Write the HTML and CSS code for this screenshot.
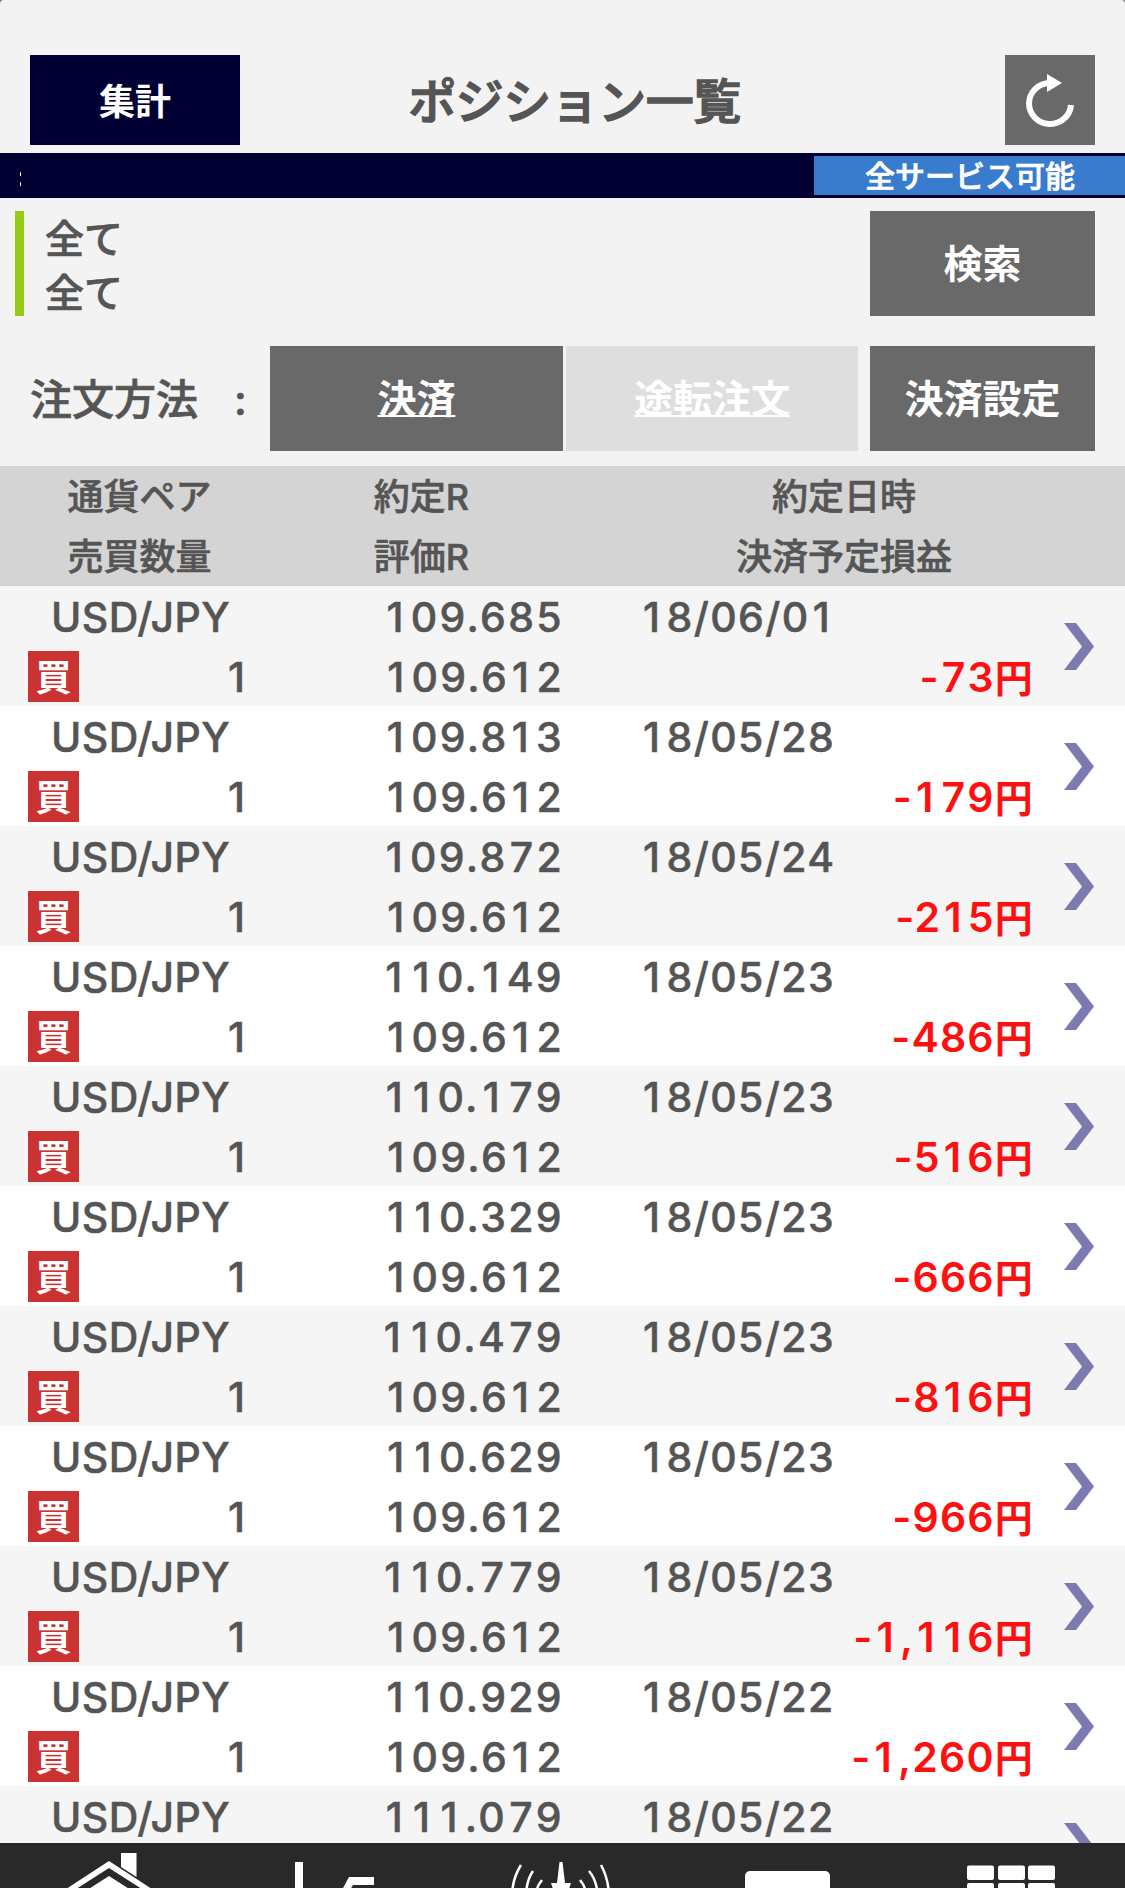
FILE: index.html
```
<!DOCTYPE html>
<html lang="ja">
<head>
    <meta charset="UTF-8">
    <meta name="viewport" content="width=device-width, initial-scale=1.0">
    <title>ポジション一覧</title>
    <link rel="stylesheet" href="styles.css">
</head>
<body>
<div class="screen">

    <!-- ヘッダー -->
    <header class="header">
        <button class="btn_total">集計</button>
        <h1 class="title">ポジション一覧</h1>
        <button class="btn_reload">
            <svg width="50" height="54" viewBox="0 0 50 54">
                <path d="M25 10 A21 20.500 0 1 0 46 32" fill="none" stroke="#fff" stroke-width="6"/>
                <path d="M22 1 L37 10 L22 19 Z" fill="#fff"/>
            </svg>
        </button>
    </header>

    <!-- サービス状況 -->
    <div class="status">
        <span class="ticker">:</span>
        <span class="service">全サービス可能</span>
    </div>

    <!-- 検索条件 -->
    <div class="filter">
        <div class="filter_text">
            <div>全て</div>
            <div>全て</div>
        </div>
        <button class="btn btn_side">検索</button>
    </div>

    <!-- 注文方法 -->
    <div class="order">
        <div class="order_label"><span>注文方法</span><span class="colon">:</span></div>
        <button class="btn btn_order">決済</button>
        <button class="btn btn_order disabled">途転注文</button>
        <button class="btn btn_side">決済設定</button>
    </div>

    <!-- 一覧 -->
    <div class="list_head">
        <div class="head1">通貨ペア<br>売買数量</div>
        <div class="head2">約定R<br>評価R</div>
        <div class="head3">約定日時<br>決済予定損益</div>
    </div>
    <div class="list"></div>

    <!-- フッターメニュー -->
    <footer class="footer">
        <svg width="1125" height="45" viewBox="0 0 1125 45">
            <g fill="#fff">
                <path d="M121 10 H136.500 V34 L121 24 Z"/>
                <path d="M109 18 L155 48 H145 L109 25 L73 48 H63 Z"/>
                <path d="M109 33 L134 49 H84 Z"/>
                <path d="M295 19 H303 V45 H295 Z"/>
                <path d="M349 34 H374 V42 H353 L350 47 H342 Z"/>
                <path d="M559.500 19 H562.500 L565 40 H571 L569 46 H553 L551 40 H557 Z"/>
                <rect x="745" y="28" width="85" height="30" rx="5"/>
                <rect x="967" y="22.500" width="27" height="14.500" rx="2"/>
                <rect x="998" y="22.500" width="27" height="14.500" rx="2"/>
                <rect x="1028" y="22.500" width="27" height="14.500" rx="2"/>
                <rect x="967" y="40" width="27" height="14" rx="2"/>
                <rect x="998" y="40" width="27" height="14" rx="2"/>
                <rect x="1028" y="40" width="27" height="14" rx="2"/>
            </g>
            <g fill="none" stroke="#fff" stroke-width="2.500">
                <path d="M521 22 Q514 33 512.500 46"/>
                <path d="M533 28 Q528 35 526.500 46"/>
                <path d="M542 37 Q538 42 537 46"/>
                <path d="M601 22 Q607 33 608.500 46"/>
                <path d="M589 28 Q595 35 597 46"/>
                <path d="M580 37 Q584 42 585 46"/>
            </g>
        </svg>
    </footer>
</div>

<script>
    // 約定R, 約定日時, 決済予定損益
    let positions = [
        ["109.685", "18/06/01", "-73"],
        ["109.813", "18/05/28", "-179"],
        ["109.872", "18/05/24", "-215"],
        ["110.149", "18/05/23", "-486"],
        ["110.179", "18/05/23", "-516"],
        ["110.329", "18/05/23", "-666"],
        ["110.479", "18/05/23", "-816"],
        ["110.629", "18/05/23", "-966"],
        ["110.779", "18/05/23", "-1,116"],
        ["110.929", "18/05/22", "-1,260"],
        ["111.079", "18/05/22", ""]
    ];

    // 「1」と「7」は幅が狭いので桁をそろえる
    function digits(text){
        return text.replace(/1/g, `<span class="one">1</span>`)
                   .replace(/7/g, `<span class="seven">7</span>`);
    }

    let str = ``;
    positions.forEach(function(item){
        str += `<div class="row">
            <div class="pair">
                <div class="line">USD/JPY</div>`;
        // 損益がまだない行は上段だけ表示
        if(item[2]){
            str += `<div class="line amount"><span class="buy">買</span><span>1</span></div>`;
        }
        str += `</div>
            <div class="rate">
                <div class="line">${digits(item[0])}</div>`;
        if(item[2]){
            str += `<div class="line">${digits("109.612")}</div>`;
        }
        str += `</div>
            <div class="result">
                <div class="line date">${digits(item[1])}</div>`;
        if(item[2]){
            str += `<div class="line loss">${digits(item[2])}<span class="yen">円</span></div>`;
        }
        str += `</div>
            <svg class="arrow" width="30" height="47" viewBox="0 0 30 47"><path d="M0 0 H12 L30 23.500 L12 47 H0 L18 23.500 Z" fill="#7b7bb0"/></svg>
        </div>`;
    });
    document.querySelector(".list").innerHTML = str;
</script>
</body>
</html>
```
FILE: styles.css
```
*{
    box-sizing: border-box;
}
html{
    background-color: #777;
}
body{
    margin: 0;
    font-family: "Inter", "Noto Sans CJK JP", sans-serif;
    font-weight: 500;
    color: #555;
}
button{
    border: none;
    padding: 0;
    font-family: inherit;
    color: #fff;
}
.screen{
    width: 1125px;
    height: 1888px;
    display: flex;
    flex-direction: column;
    overflow: hidden;
    background-color: #f3f3f3;
    border-radius: 4px 4px 0 0;
}

/* ヘッダー */
.header{
    height: 153px;
    padding: 55px 30px 8px;
    display: flex;
    flex-shrink: 0;
}
.btn_total{
    width: 210px;
    height: 90px;
    padding-bottom: 2px;
    background-color: #000033;
    font-size: 36px;
    font-weight: 700;
}
.title{
    flex: 1;
    margin: 0;
    padding-right: 96px;
    font-size: 48px;
    font-weight: 500;
    line-height: 93px;
    letter-spacing: -0.5px;
    text-align: center;
    -webkit-text-stroke: 1.4px #555;
}
.btn_reload{
    width: 90px;
    height: 90px;
    background-color: #696969;
    display: flex;
    align-items: center;
    justify-content: center;
}

/* サービス状況 */
.status{
    height: 45px;
    padding: 3px 0;
    display: flex;
    justify-content: space-between;
    flex-shrink: 0;
    background-color: #000033;
    color: #fff;
}
.ticker{
    width: 1px;
    margin-left: 20px;
    overflow: hidden;
    font-size: 26px;
    line-height: 41px;
    text-indent: -3px;
}
.service{
    width: 311px;
    height: 39px;
    background-color: #397bcc;
    font-size: 30px;
    line-height: 41px;
    text-align: center;
    text-indent: 1px;
    -webkit-text-stroke: 0.7px #fff;
}

/* 検索条件 */
.filter{
    height: 148px;
    padding: 13px 30px 30px 15px;
    display: flex;
    justify-content: space-between;
    flex-shrink: 0;
}
.filter_text{
    height: 105px;
    padding: 1px 0 0 21px;
    border-left: 9px solid #94cb15;
    font-size: 39px;
    line-height: 54px;
    -webkit-text-stroke: 0.7px #555;
}
.btn{
    height: 105px;
    padding-bottom: 5px;
    background-color: #696969;
    font-size: 39px;
    font-weight: 700;
}
.btn_side{
    width: 225px;
}

/* 注文方法 */
.order{
    height: 120px;
    padding: 0 30px;
    display: flex;
    flex-shrink: 0;
}
.order_label{
    width: 240px;
    font-size: 42px;
    line-height: 108px;
    -webkit-text-stroke: 0.7px #555;
}
.colon{
    margin-left: 36px;
}
.btn_order{
    width: 293px;
    margin-right: 3px;
    text-decoration: underline;
    text-decoration-thickness: 2px;
    text-underline-offset: 2px;
    text-decoration-skip-ink: none;
}
.disabled{
    width: 292px;
    margin-right: 12px;
    background-color: #dedede;
}

/* 一覧 */
.list_head{
    height: 120px;
    padding-top: 1px;
    display: flex;
    flex-shrink: 0;
    background-color: #d4d4d4;
    font-size: 36px;
    line-height: 60px;
    text-align: center;
    -webkit-text-stroke: 0.6px #555;
}
.head1{
    width: 279px;
}
.head2{
    width: 285px;
}
.head3{
    width: 560px;
}
.list{
    flex: 1;
    overflow: hidden;
}
.row{
    height: 120px;
    display: flex;
    background-color: #fff;
    font-size: 41px;
    -webkit-text-stroke: 0.5px;
}
.row:nth-child(odd){
    background-color: #f5f5f5;
}
.line{
    height: 60px;
    line-height: 62px;
    white-space: nowrap;
}
.pair{
    width: 247px;
    padding-left: 28px;
}
.pair .line:first-child{
    padding-left: 23px;
    letter-spacing: 0.5px;
}
.amount{
    padding-right: 2px;
    display: flex;
    justify-content: space-between;
}
.one{
    padding: 0 5px 0 3px;
}
.seven{
    padding: 0 1px 0 2px;
}
.buy{
    width: 51px;
    height: 51px;
    margin-top: 5px;
    background-color: #cb3333;
    color: #fff;
    font-size: 36px;
    font-weight: 700;
    line-height: 55px;
    text-align: center;
    -webkit-text-stroke: 0;
}
.rate{
    width: 317px;
    text-align: right;
    letter-spacing: 2.3px;
}
.result{
    width: 470px;
    padding-left: 76px;
}
.date{
    letter-spacing: 1.4px;
}
.loss{
    color: #ff1010;
    line-height: 62px;
    letter-spacing: 1.2px;
    font-weight: 600;
    text-align: right;
    -webkit-text-stroke: 0;
}
.yen{
    font-size: 38px;
}
.arrow{
    flex-shrink: 0;
    margin: 37px 0 0 30px;
}

/* フッターメニュー */
.footer{
    height: 45px;
    flex-shrink: 0;
    background-color: #292929;
}
.footer svg{
    display: block;
}
```
